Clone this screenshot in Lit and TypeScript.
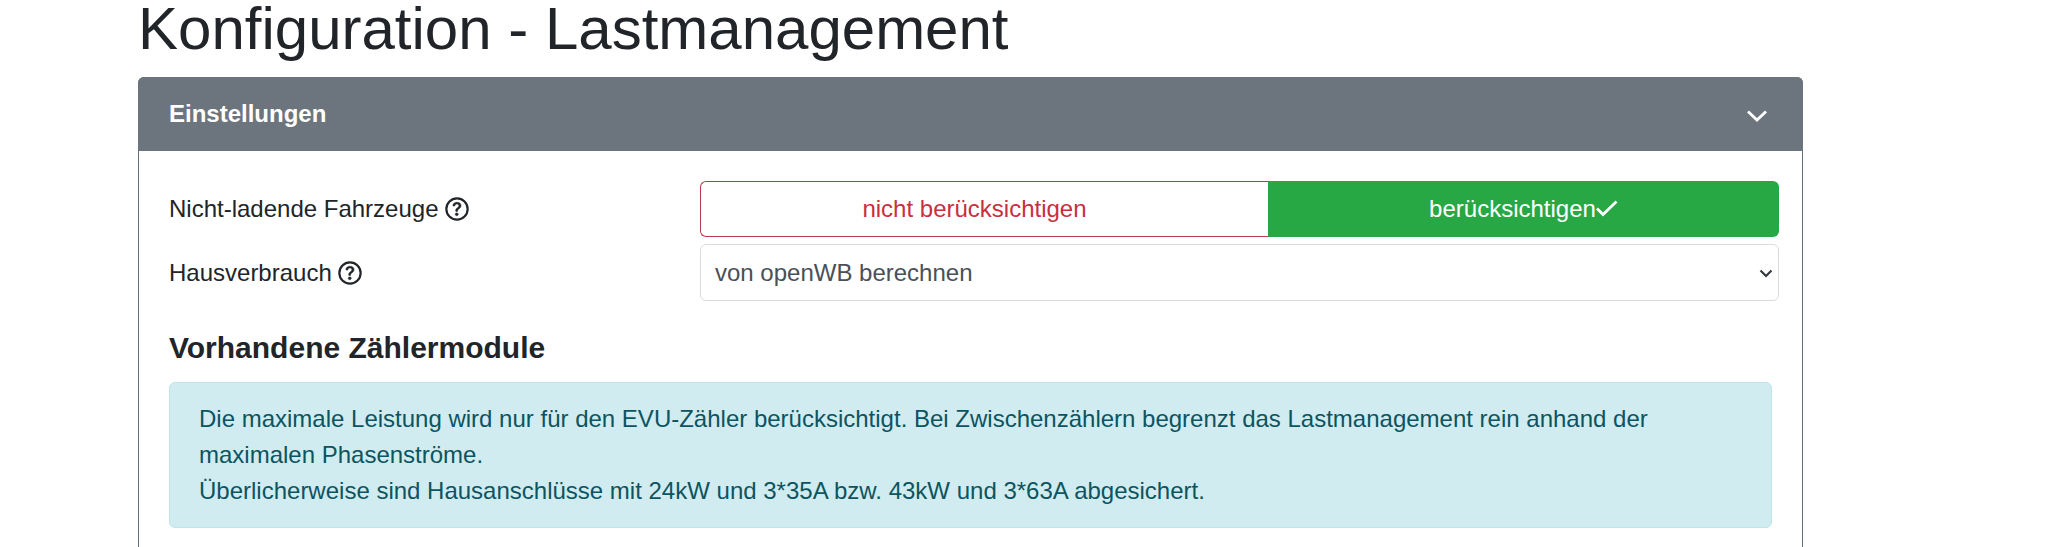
import { LitElement, html, css } from "lit";
import { customElement } from "lit/decorators.js";

@customElement("app-root")
export class AppRoot extends LitElement {
  static styles = css`
    :host {
      display: block;
      height: 547px;
      overflow: hidden;
      background: #fff;
      color: #212529;
      font-family: "Liberation Sans", Arial, sans-serif;
      font-size: 24px;
      line-height: 36px;
    }
    .page {
      width: 1665px;
      margin-left: 138px;
    }
    h1 {
      margin: 0;
      height: 77px;
      font-size: 60px;
      font-weight: 400;
      line-height: 58px;
    }
    .card {
      border: 1px solid #666e76;
      border-bottom: none;
      border-radius: 6px 6px 0 0;
      height: 470px;
      box-sizing: border-box;
    }
    .head {
      margin: -1px -1px 0;
      height: 74px;
      box-sizing: border-box;
      background: #6c757d;
      border-radius: 6px 6px 0 0;
      display: flex;
      align-items: center;
      justify-content: space-between;
      padding: 0 34px 0 31px;
      color: #fff;
      font-weight: 700;
    }
    .chev {
      width: 24px;
      height: 24px;
      display: block;
    }
    .body {
      padding: 30px 23px 0 30px;
    }
    .row {
      display: grid;
      grid-template-columns: 531px 1fr;
      align-items: center;
      margin-bottom: 7px;
    }
    .label {
      display: flex;
      align-items: center;
      gap: 6px;
    }
    .q {
      width: 24px;
      height: 24px;
      display: block;
    }
    .toggle {
      display: grid;
      grid-template-columns: 568px 1fr;
      height: 56px;
      text-align: center;
    }
    .off {
      border: 1px solid #b93a4c;
      border-right: none;
      border-radius: 6px 0 0 6px;
      color: #c82f40;
      display: flex;
      align-items: center;
      justify-content: center;
      padding-right: 20px;
    }
    .on {
      background: #28a745;
      color: #fff;
      border-radius: 0 6px 6px 0;
      display: flex;
      align-items: center;
      justify-content: center;
    }
    .check {
      width: 22px;
      height: 24px;
      display: block;
    }
    .select {
      height: 57px;
      box-sizing: border-box;
      border: 1px solid #d8dbdf;
      border-radius: 6px;
      color: #495057;
      display: flex;
      align-items: center;
      justify-content: space-between;
      padding: 0 4px 0 14px;
    }
    .caret {
      width: 16px;
      height: 16px;
      display: block;
    }
    h2 {
      margin: 29px 0 0;
      font-size: 30px;
      line-height: 36px;
      font-weight: 700;
    }
    .alert {
      margin: 16px 7px 0 0;
      box-sizing: border-box;
      height: 146px;
      padding: 18px 29px;
      background: #d1ecf1;
      border: 1px solid #bee5eb;
      border-radius: 6px;
      color: #0c5460;
    }
  `;

  private help() {
    return html`<svg class="q" viewBox="0 0 16 16">
      <circle cx="8" cy="8" r="7.1" fill="none" stroke="#212529" stroke-width="1.45" />
      <path
        fill="#212529"
        stroke="#212529"
        stroke-width="0.35"
        d="M5.255 5.786a.237.237 0 0 0 .241.247h.825c.138 0 .248-.113.266-.25.09-.656.54-1.134 1.342-1.134.686 0 1.314.343 1.314 1.168 0 .635-.374.927-.965 1.371-.673.489-1.206 1.06-1.168 1.987l.003.217a.25.25 0 0 0 .25.246h.811a.25.25 0 0 0 .25-.25v-.105c0-.718.273-.927 1.01-1.486.609-.463 1.244-.977 1.244-2.056 0-1.511-1.276-2.241-2.673-2.241-1.267 0-2.655.59-2.75 2.286m1.557 5.763c0 .533.425.927 1.01.927.609 0 1.028-.394 1.028-.927 0-.552-.42-.94-1.029-.94-.584 0-1.009.388-1.009.94"
      />
    </svg>`;
  }

  render() {
    return html`
      <div class="page">
        <h1>Konfiguration - Lastmanagement</h1>
        <div class="card">
          <div class="head">
            <span>Einstellungen</span>
            <svg class="chev" viewBox="0 0 24 24" fill="none" stroke="#fff" stroke-width="2.8">
              <path d="M3 9.5l9 8.5 9-8.5" />
            </svg>
          </div>
          <div class="body">
            <div class="row">
              <div class="label">Nicht-ladende Fahrzeuge ${this.help()}</div>
              <div class="toggle">
                <div class="off">nicht berücksichtigen</div>
                <div class="on">
                  berücksichtigen<svg class="check" viewBox="0 0 22 24" fill="none" stroke="#fff" stroke-width="2.8">
                    <path d="M1 11.5l6 6L20.5 4.5" />
                  </svg>
                </div>
              </div>
            </div>
            <div class="row">
              <div class="label">Hausverbrauch ${this.help()}</div>
              <div class="select">
                <span>von openWB berechnen</span>
                <svg class="caret" viewBox="0 0 16 16" fill="none" stroke="#343a40" stroke-width="2.2">
                  <path d="M2.5 5.5l5.5 5.5 5.5-5.5" />
                </svg>
              </div>
            </div>
            <h2>Vorhandene Zählermodule</h2>
            <div class="alert">
              Die maximale Leistung wird nur für den EVU-Zähler berücksichtigt. Bei Zwischenzählern begrenzt das Lastmanagement rein anhand der maximalen Phasenströme.<br />
              Überlicherweise sind Hausanschlüsse mit 24kW und 3*35A bzw. 43kW und 3*63A abgesichert.
            </div>
          </div>
        </div>
      </div>
    `;
  }
}
